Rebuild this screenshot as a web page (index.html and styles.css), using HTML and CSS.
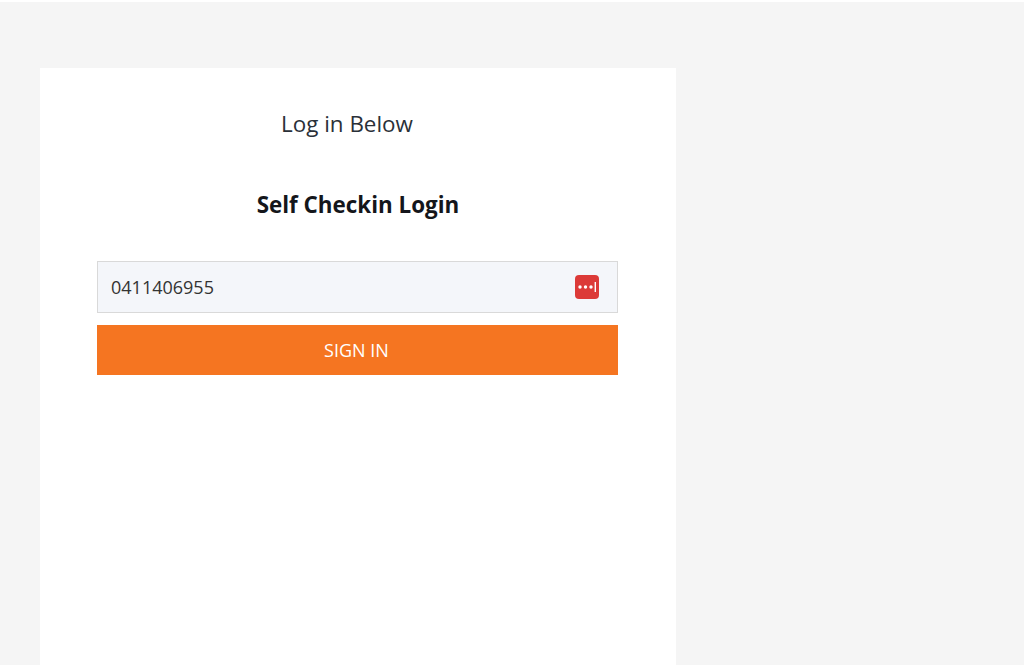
FILE: index.html
```html
<!DOCTYPE html>
<html lang="en">
<head>
    <meta charset="UTF-8">
    <meta name="viewport" content="width=device-width, initial-scale=1.0">
    <title>Self Checkin Login</title>
    <link rel="stylesheet" href="styles.css">
</head>
<body>
    <div class="page">
        <div class="login-box">
            <p class="intro">Log in Below</p>
            <h1>Self Checkin Login</h1>
            <form class="login-form">
                <div class="field">
                    <input class="field-input" type="text" value="0411406955">
                    <svg class="field-icon" width="24" height="24" viewBox="0 0 24 24" aria-hidden="true">
                        <rect width="24" height="24" rx="4" fill="#dc3a38"/>
                        <circle cx="5" cy="12" r="1.7" fill="#fff"/>
                        <circle cx="10.5" cy="12" r="1.7" fill="#fff"/>
                        <circle cx="16" cy="12" r="1.7" fill="#fff"/>
                        <rect x="19.6" y="7" width="1.4" height="10" fill="#fff"/>
                    </svg>
                </div>
                <button class="button" type="button">SIGN IN</button>
            </form>
        </div>
    </div>
</body>
</html>
```

FILE: styles.css
```css
html, body {
    height: 100%;
}
body {
    font-family: "Open Sans", Arial, sans-serif;
    margin: 0;
    padding-top: 2px;
    box-sizing: border-box;
    overflow: hidden;
    background-color: #fff;
}
.page {
    height: 100%;
    padding: 66px 0 0 40px;
    box-sizing: border-box;
    background-color: #f5f5f5;
}
.login-box {
    width: 636px;
    height: 100%;
    padding: 39px 57px 0;
    box-sizing: border-box;
    background-color: #fff;
}
.intro {
    margin: 0 22px 0 0;
    font-size: 22.4px;
    line-height: 33px;
    text-align: center;
    color: #2a3038;
}
.login-box h1 {
    margin: 48px 0 40px;
    font-size: 22.4px;
    line-height: 33px;
    font-weight: 700;
    text-align: center;
    color: #14161b;
}
.login-form {
    width: 521px;
}
.field {
    position: relative;
    margin-bottom: 12px;
}
.field-input {
    display: block;
    width: 100%;
    height: 52px;
    padding: 0 13px;
    box-sizing: border-box;
    border: 1px solid #d9d9d9;
    background-color: #f4f6fa;
    font-family: inherit;
    font-size: 18px;
    color: #333;
}
.field-icon {
    position: absolute;
    top: 14px;
    right: 19px;
}
.button {
    display: block;
    width: 100%;
    height: 50px;
    padding: 0 2px 0 0;
    border: none;
    background-color: #f57521;
    color: white;
    font-family: inherit;
    font-size: 18px;
    cursor: pointer;
}
```
